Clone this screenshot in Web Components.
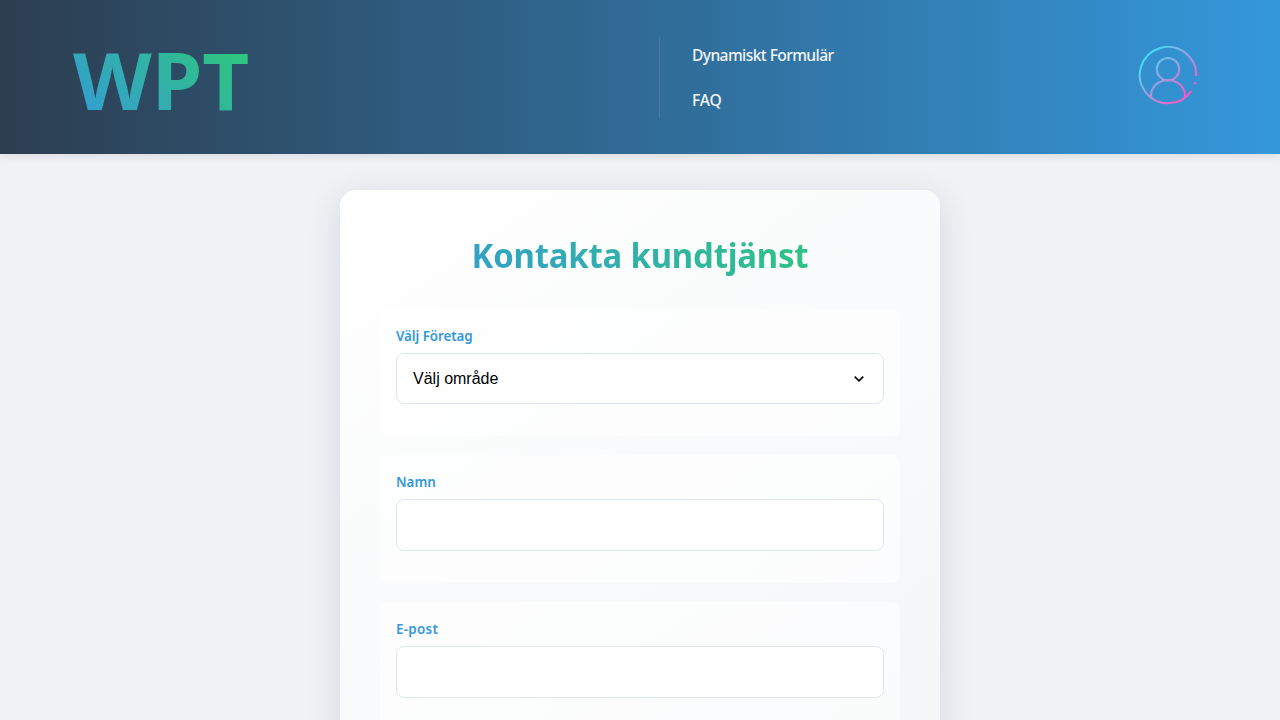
<!DOCTYPE html>
<html lang="sv">
<head>
<meta charset="utf-8">
<title>Kontakta kundtjänst</title>
<style>
html,body{margin:0;height:720px;overflow:hidden}
body{background:#f0f2f5;font-family:"Noto Sans","Open Sans",sans-serif}
main{display:flow-root;height:566px;overflow:hidden}
</style>
</head>
<body>
<site-header>
  <nav-link>Dynamiskt Formulär</nav-link>
  <nav-link style="--ls:-.1px">FAQ</nav-link>
</site-header>
<main>
<contact-card heading="Kontakta kundtjänst">
  <form-field label="Välj Företag" style="--h:51px;--ls:-.08px"><select-box>Välj område</select-box></form-field>
  <form-field label="Namn"></form-field>
  <form-field label="E-post" style="--ls:.3px"></form-field>
</contact-card>
</main>
<script>
const define = (name, html) => customElements.define(name, class extends HTMLElement {
  constructor() {
    super();
    this.attachShadow({mode: 'open'}).innerHTML = html;
  }
  connectedCallback() {
    for (const key of ['label', 'heading']) {
      const node = this.shadowRoot.querySelector('.' + key);
      if (node && this.hasAttribute(key)) node.textContent = this.getAttribute(key);
    }
  }
});

define('user-icon', `
<style>:host{display:block;width:60px;height:60px}svg{display:block}</style>
<svg width="60" height="60" viewBox="0 0 60 60" fill="none" stroke="url(#g)" stroke-width="2.1">
  <defs><linearGradient id="g" gradientUnits="userSpaceOnUse" x1="9" y1="9" x2="48" y2="48">
    <stop offset="0" stop-color="#3fdcff"/><stop offset=".52" stop-color="#9a9fdf"/><stop offset="1" stop-color="#ff58c4"/>
  </linearGradient></defs>
  <path d="M58.2 31A28.2 28.2 0 1 0 53.3 46" />
  <path d="M57.1 37.2L56.6 39.4"/>
  <circle cx="30" cy="24.2" r="11.2"/>
  <path d="M13 52.3V51C13 41.5 20.5 35.2 30 35.2S47 41.5 47 51V52.3"/>
</svg>`);

define('nav-link', `
<style>:host{display:block;height:45px;line-height:45px;font-size:15.6px;font-weight:500;color:#f3f6f8;letter-spacing:var(--ls,-.6px);white-space:nowrap}</style>
<slot></slot>`);

define('site-header', `
<style>
:host{display:grid;grid-template-columns:659px 1fr auto;align-items:start;box-sizing:border-box;height:154px;padding-right:82px;background:linear-gradient(90deg,#2c3e50,#3498db);box-shadow:0 2px 10px rgba(0,0,0,.1);position:relative}
.logo{margin:26px 0 0 73px;justify-self:start;font-size:78.5px;line-height:107px;font-weight:700;background:linear-gradient(45deg,#3498db,#2ecc71);-webkit-background-clip:text;color:transparent;transform:scaleX(1.037);transform-origin:0 0}
nav{display:flow-root;margin-top:37px;height:81px;border-left:1px solid rgba(255,255,255,.1);padding-left:32px;box-sizing:border-box}
nav slot{display:block;margin-top:-4px}
user-icon{margin-top:45px}
</style>
<div class="logo">WPT</div><nav><slot></slot></nav><user-icon></user-icon>`);

define('contact-card', `
<style>
:host{display:block;box-sizing:border-box;width:600px;height:600px;margin:36px auto 0;padding:40px 40px 0;border-radius:16px;background:linear-gradient(145deg,#fff,#f3f5f7) 0 0/100% 640px;box-shadow:0 8px 32px rgba(44,62,80,.15)}
.clip{height:490px;overflow:hidden}
.heading{width:520px;margin:0 0 31px;height:48px;line-height:50px;text-align:center;font-size:34.5px;font-weight:700;white-space:nowrap;background:linear-gradient(45deg,#3498db,#2ecc71);-webkit-background-clip:text;color:transparent;letter-spacing:-.2px;transform:scaleX(.953)}
</style>
<div class="clip"><h1 class="heading"></h1><slot></slot></div>`);

define('form-field', `
<style>
:host{display:block;box-sizing:border-box;padding:16px 16px 32px;margin-bottom:19px;border-radius:8px;background:rgba(255,255,255,.6)}
.label{display:block;height:22px;line-height:22px;margin-bottom:6px;font-size:13.4px;font-weight:600;color:#3498db;letter-spacing:var(--ls,0)}
.box{display:flex;align-items:center;box-sizing:border-box;height:var(--h,52px);border:1px solid #e0e6ef;border-radius:8px;background:#fff;padding:0 16px}
slot{display:block;flex:1}
</style>
<div class="label"></div><div class="box"><slot></slot></div>`);

define('select-box', `
<style>
:host{display:flex;flex:1;align-items:center;justify-content:space-between;font:16px "Liberation Sans",sans-serif;color:#000}
svg{display:block;margin:1px 3px 0 0}
</style>
<span><slot></slot></span>
<svg width="10" height="6" viewBox="0 0 10 6" fill="none" stroke="#000" stroke-width="1.6"><path d="M.7 .7L5 4.8L9.3 .7"/></svg>`);
</script>
</body>
</html>
